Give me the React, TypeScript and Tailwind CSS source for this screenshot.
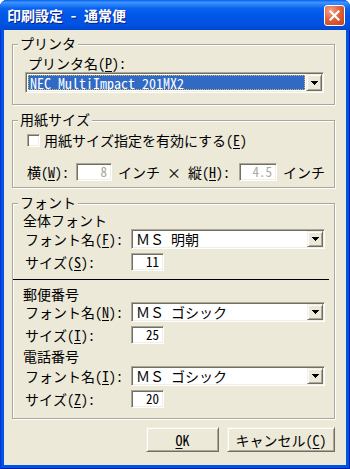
import type { ReactNode } from "react";

const sunken =
  "border border-t-[#ACA899] border-l-[#ACA899] border-b-white border-r-white shadow-[inset_1px_1px_0_#716F64,inset_-1px_-1px_0_#F1EFE2]";
const raised =
  "border border-t-[#F1EFE2] border-l-[#F1EFE2] border-b-[#716F64] border-r-[#716F64] shadow-[inset_1px_1px_0_#FFFFFF,inset_-1px_-1px_0_#ACA899]";

function Key({ k }: { k: string }) {
  return <span className="underline underline-offset-[2px]">{k}</span>;
}

function Arrow() {
  return (
    <svg width="7" height="4" viewBox="0 0 7 4" shapeRendering="crispEdges">
      <rect x="0" y="0" width="7" height="1" fill="#000" />
      <rect x="1" y="1" width="5" height="1" fill="#000" />
      <rect x="2" y="2" width="3" height="1" fill="#000" />
      <rect x="3" y="3" width="1" height="1" fill="#000" />
    </svg>
  );
}

function Combo({ value, selected, className }: { value: string; selected?: boolean; className: string }) {
  return (
    <div className={`flex h-[20px] bg-white p-[1px] ${sunken} ${className}`}>
      {selected ? (
        <div className="m-[1px] flex flex-1 items-center border border-dotted border-[#D8B860] bg-[#316AC5] pl-[1px] text-white">
          {value}
        </div>
      ) : (
        <div className="flex flex-1 items-center pl-[3px]">{value}</div>
      )}
      <div className={`flex w-[16px] items-center justify-center bg-[#ECE9D8] ${raised}`}>
        <Arrow />
      </div>
    </div>
  );
}

function NumBox({ value, disabled, className }: { value: string; disabled?: boolean; className: string }) {
  return (
    <div
      className={`flex h-[18px] items-center justify-end bg-white pr-[4px] text-[13px] ${sunken} ${className} ${
        disabled ? "text-[#ACA899]" : "text-black"
      }`}
    >
      {value}
    </div>
  );
}

function Group({ title, className, children }: { title: string; className: string; children: ReactNode }) {
  return (
    <div
      className={`relative ml-[8px] w-[323px] border border-[#ACA899] shadow-[1px_1px_0_#FFFFFF,inset_1px_1px_0_#FFFFFF] ${className}`}
    >
      <span className="absolute -top-[9px] left-[5px] bg-[#ECE9D8] px-[2px] leading-[14px]">{title}</span>
      {children}
    </div>
  );
}

function FontBlock({
  title,
  nameKey,
  font,
  sizeLabel,
  sizeKey,
  size,
  comboGap,
}: {
  title: string;
  nameKey: string;
  font: string;
  sizeLabel: string;
  sizeKey: string;
  size: string;
  comboGap: string;
}) {
  return (
    <div className="flex flex-col">
      <div className="h-[16px]">{title}</div>
      <div className={`flex items-center ${comboGap}`}>
        <span className="w-[108px] pl-[2px]">
          フォント名(<Key k={nameKey} />):
        </span>
        <Combo value={font} className="w-[194px]" />
      </div>
      <div className="mt-[4px] flex items-center">
        <span className="w-[108px] pl-[2px]">
          {sizeLabel}(<Key k={sizeKey} />):
        </span>
        <NumBox value={size} className="w-[33px]" />
      </div>
    </div>
  );
}

export default function App() {
  return (
    <div className="h-[469px] w-[350px] bg-white font-['Noto_Sans_Mono_CJK_JP','Noto_Sans_CJK_JP',sans-serif] text-[14px] leading-[16px] text-black">
      <div className="flex h-full flex-col overflow-hidden rounded-t-[7px] bg-[#0054E3] shadow-[inset_1px_0_0_#0831D9,inset_-1px_0_0_#001EA0,inset_0_-1px_0_#001EA0]">
        {/* Title bar */}
        <div className="flex h-[30px] shrink-0 items-center justify-between bg-[linear-gradient(to_bottom,#0A5DEE_0%,#3D95FF_8%,#2B85FA_14%,#0A63EF_28%,#0057E8_50%,#0053E2_80%,#0047CF_100%)] pl-[7px] pr-[5px]">
          <span className="font-bold text-white [text-shadow:1px_1px_0_#0A1F8C]">印刷設定 - 通常便</span>
          <div className="flex h-[21px] w-[21px] items-center justify-center rounded-[3px] border border-white bg-[radial-gradient(circle_at_30%_25%,#F2A58A_0%,#E2623E_45%,#C3411B_100%)]">
            <svg width="11" height="11" viewBox="0 0 11 11">
              <path d="M1.5 1.5 L9.5 9.5 M9.5 1.5 L1.5 9.5" stroke="#fff" strokeWidth="2.2" strokeLinecap="square" />
            </svg>
          </div>
        </div>

        {/* Client area */}
        <div className="mx-[4px] flex h-[435px] shrink-0 flex-col bg-[#ECE9D8]">
          <Group title="プリンタ" className="mt-[14px] pb-[11px]">
            <div className="pl-[15px] pt-[10px]">
              プリンタ名(<Key k="P" />):
            </div>
            <Combo value="NEC MultiImpact 201MX2" selected className="ml-[12px] mt-[1px] h-[21px] w-[299px]" />
          </Group>

          <Group title="用紙サイズ" className="mt-[15px] pb-[7px]">
            <div className="mt-[11px] flex h-[16px] items-center pl-[14px]">
              <div className={`h-[13px] w-[13px] bg-white ${sunken}`} />
              <span className="ml-[4px]">
                用紙サイズ指定を有効にする(<Key k="E" />)
              </span>
            </div>
            <div className="mt-[15px] flex h-[17px] items-center pl-[14px]">
              <span className="w-[49px]">
                横(<Key k="W" />):
              </span>
              <NumBox value="8" disabled className="h-[17px] w-[36px]" />
              <span className="w-[127px] pl-[6px]">
                インチ × 縦(<Key k="H" />):
              </span>
              <NumBox value="4.5" disabled className="h-[17px] w-[38px]" />
              <span className="ml-[6px]">インチ</span>
            </div>
          </Group>

          <Group title="フォント" className="mt-[15px] pb-[10px]">
            <div className="pl-[10px] pt-[8px]">
              <FontBlock
                title="全体フォント"
                nameKey="F"
                font="ＭＳ 明朝"
                sizeLabel="サイズ"
                sizeKey="S"
                size="11"
                comboGap="mt-[1px]"
              />
              <div className="-ml-[10px] mt-[8px] h-px w-[316px] bg-black" />
              <div className="mt-[6px]">
                <FontBlock
                  title="郵便番号"
                  nameKey="N"
                  font="ＭＳ ゴシック"
                  sizeLabel="サイズ"
                  sizeKey="I"
                  size="25"
                  comboGap="mt-0"
                />
              </div>
              <div className="mt-[4px]">
                <FontBlock
                  title="電話番号"
                  nameKey="I"
                  font="ＭＳ ゴシック"
                  sizeLabel="サイズ"
                  sizeKey="Z"
                  size="20"
                  comboGap="mt-[2px]"
                />
              </div>
            </div>
          </Group>

          <div className="mt-[8px] flex justify-end gap-[8px] pr-[11px]">
            <button className={`h-[25px] w-[73px] bg-[#ECE9D8] ${raised}`}>
              <Key k="O" />K
            </button>
            <button className={`h-[25px] w-[108px] bg-[#ECE9D8] ${raised}`}>
              キャンセル(<Key k="C" />)
            </button>
          </div>
        </div>
      </div>
    </div>
  );
}
